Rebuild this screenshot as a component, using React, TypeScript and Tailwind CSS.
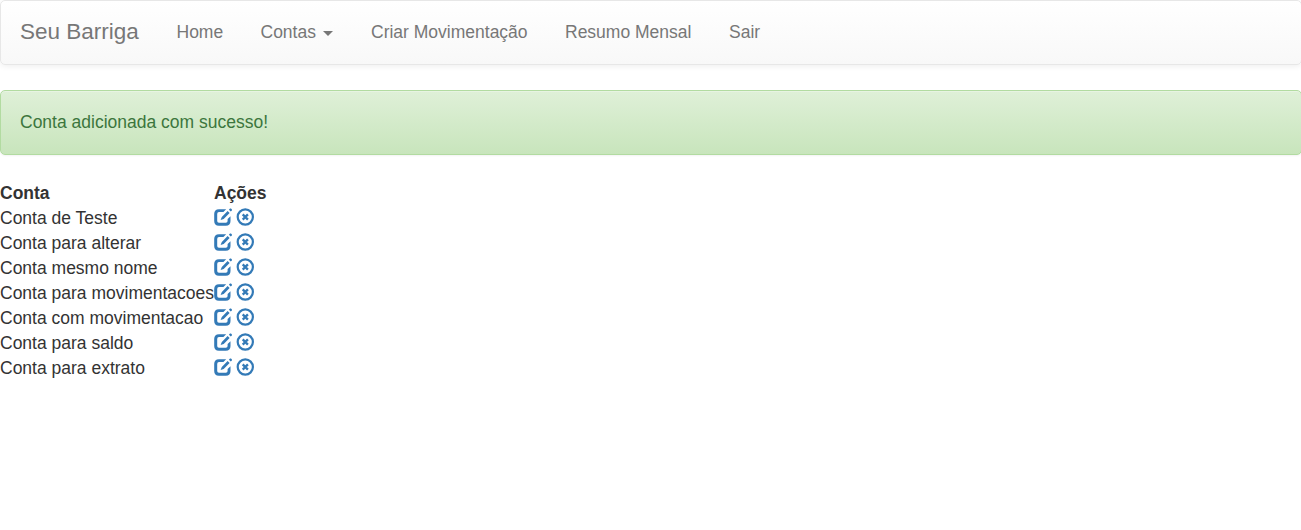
const accounts = [
  "Conta de Teste",
  "Conta para alterar",
  "Conta mesmo nome",
  "Conta para movimentacoes",
  "Conta com movimentacao",
  "Conta para saldo",
  "Conta para extrato",
];

function EditIcon() {
  return (
    <svg viewBox="0 0 18 18" className="h-[18px] w-[18px]" fill="currentColor">
      <path d="M5 1.3H12.2L9.4 4.1H5Q3.2 4.1 3.2 6V13Q3.2 14.8 5 14.8H11.8Q13.6 14.8 13.6 13V11L16.5 8.2V13Q16.5 17.7 11.8 17.7H4.9Q0.2 17.7 0.2 13V6Q0.2 1.3 5 1.3Z" />
      <path d="M13.6 3L15.6 5L9.7 10.9L6.6 12.1L7.8 8.9ZM14.9 1.7L16 0.6Q16.5 0.2 17 0.6L17.9 1.5Q18.2 2 17.8 2.5L16.8 3.6Z" />
    </svg>
  );
}

function RemoveIcon() {
  return (
    <svg viewBox="0 0 18 18" className="h-[18px] w-[18px]" fill="none" stroke="currentColor">
      <circle cx="9.3" cy="9" r="7.6" strokeWidth="2.2" />
      <path d="M6.7 6.4L11.9 11.6M11.9 6.4L6.7 11.6" strokeWidth="2.3" />
    </svg>
  );
}

export default function App() {
  return (
    <div className="h-[530px] overflow-hidden bg-white font-['Liberation_Sans',Arial,sans-serif] text-[17.5px] leading-[25px] text-[#333]">
      <nav className="flex h-[65px] w-[1302px] items-start rounded-[5px] border border-[#e7e7e7] bg-linear-to-b from-white to-[#f8f8f8] pt-[19px] text-[#777] shadow-[0_1px_6px_rgba(0,0,0,0.075)]">
        <a href="#" className="-mt-px ml-[19px] w-[156.5px] text-[22.5px]">Seu Barriga</a>
        <a href="#" className="w-[84px]">Home</a>
        <a href="#" className="flex w-[110.5px] items-center">
          Contas
          <span className="mt-px ml-[7px] border-x-5 border-t-5 border-x-transparent border-t-[#777]" />
        </a>
        <a href="#" className="w-[194px]">Criar Movimentação</a>
        <a href="#" className="w-[164px]">Resumo Mensal</a>
        <a href="#">Sair</a>
      </nav>
      <div className="mt-[25px] h-[65px] w-[1302px] rounded-[5px] border border-[#b2dba1] bg-linear-to-b from-[#dff0d8] to-[#c8e5bc] px-[19px] pt-[19px] text-[#3c763d] shadow-[inset_0_1px_0_rgba(255,255,255,0.25),0_1px_2px_rgba(0,0,0,0.05)]">
        Conta adicionada com sucesso!
      </div>
      <table className="mt-[26px] border-collapse">
        <thead>
          <tr className="h-[25px] text-left">
            <th className="w-[214px] p-0">Conta</th>
            <th className="p-0">Ações</th>
          </tr>
        </thead>
        <tbody>
          {accounts.map((name) => (
            <tr key={name} className="h-[25px]">
              <td className="p-0 whitespace-nowrap">{name}</td>
              <td className="p-0">
                <div className="flex gap-1 pb-[3px] text-[#337ab7]">
                  <a href="#" aria-label="Editar"><EditIcon /></a>
                  <a href="#" aria-label="Remover"><RemoveIcon /></a>
                </div>
              </td>
            </tr>
          ))}
        </tbody>
      </table>
    </div>
  );
}
